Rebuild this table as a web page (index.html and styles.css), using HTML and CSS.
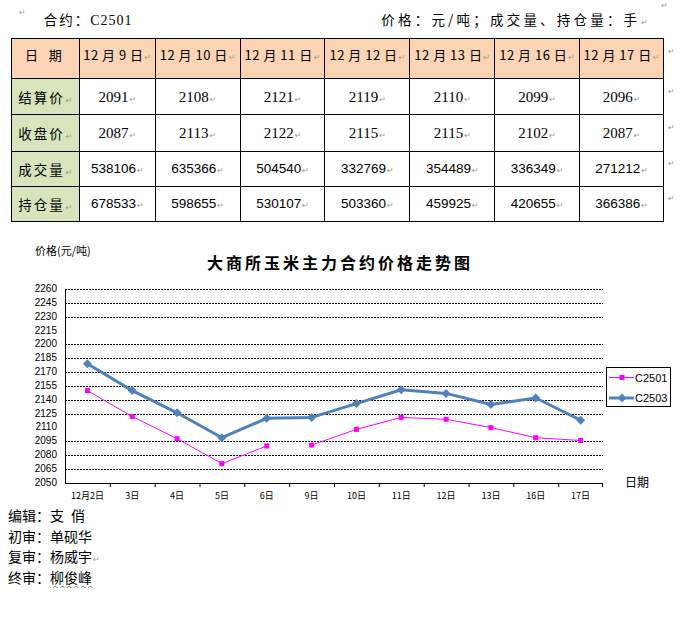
FILE: index.html
```html
<!DOCTYPE html>
<html lang="zh">
<head>
<meta charset="utf-8">
<link rel="stylesheet" href="styles.css">
</head>
<body>
<div class="page">
  <div class="topline">
    <span class="pm pm-lead">↵</span>
    <span class="contract">合约：<span class="code">C2501</span></span>
    <span class="units">价格：元/吨；成交量、持仓量：手<span class="pm">↵</span></span>
    <span class="pm pm-corner">↵</span>
  </div>
  <div class="tablewrap">
    <table class="data">
      <tr class="head">
        <td class="rowhead">日&nbsp;期</td>
        <td>12 月 9 日<span class="pm">↵</span></td>
        <td>12 月 10 日<span class="pm">↵</span></td>
        <td>12 月 11 日<span class="pm">↵</span></td>
        <td>12 月 12 日<span class="pm">↵</span></td>
        <td>12 月 13 日<span class="pm">↵</span></td>
        <td>12 月 16 日<span class="pm">↵</span></td>
        <td>12 月 17 日<span class="pm">↵</span></td>
        <td class="side"><span class="pm">↵</span></td>
      </tr>
      <tr class="serif r1">
        <td class="rowhead">结算价<span class="pm">↵</span></td>
        <td>2091<span class="pm">↵</span></td>
        <td>2108<span class="pm">↵</span></td>
        <td>2121<span class="pm">↵</span></td>
        <td>2119<span class="pm">↵</span></td>
        <td>2110<span class="pm">↵</span></td>
        <td>2099<span class="pm">↵</span></td>
        <td>2096<span class="pm">↵</span></td>
        <td class="side"><span class="pm">↵</span></td>
      </tr>
      <tr class="serif r2">
        <td class="rowhead">收盘价<span class="pm">↵</span></td>
        <td>2087<span class="pm">↵</span></td>
        <td>2113<span class="pm">↵</span></td>
        <td>2122<span class="pm">↵</span></td>
        <td>2115<span class="pm">↵</span></td>
        <td>2115<span class="pm">↵</span></td>
        <td>2102<span class="pm">↵</span></td>
        <td>2087<span class="pm">↵</span></td>
        <td class="side"><span class="pm">↵</span></td>
      </tr>
      <tr class="sans r3">
        <td class="rowhead">成交量<span class="pm">↵</span></td>
        <td>538106<span class="pm">↵</span></td>
        <td>635366<span class="pm">↵</span></td>
        <td>504540<span class="pm">↵</span></td>
        <td>332769<span class="pm">↵</span></td>
        <td>354489<span class="pm">↵</span></td>
        <td>336349<span class="pm">↵</span></td>
        <td>271212<span class="pm">↵</span></td>
        <td class="side"><span class="pm">↵</span></td>
      </tr>
      <tr class="sans r4">
        <td class="rowhead">持仓量<span class="pm">↵</span></td>
        <td>678533<span class="pm">↵</span></td>
        <td>598655<span class="pm">↵</span></td>
        <td>530107<span class="pm">↵</span></td>
        <td>503360<span class="pm">↵</span></td>
        <td>459925<span class="pm">↵</span></td>
        <td>420655<span class="pm">↵</span></td>
        <td>366386<span class="pm">↵</span></td>
        <td class="side"><span class="pm">↵</span></td>
      </tr>
    </table>
  </div>

  <svg class="chart" width="680" height="284" viewBox="0 221 680 284" xmlns="http://www.w3.org/2000/svg">
    <text class="ylabel-title" x="35" y="255">价格(元/吨)</text>
    <text class="title" x="340" y="269" text-anchor="middle">大商所玉米主力合约价格走势图</text>

    <g class="grid" stroke="#000" stroke-width="1" stroke-dasharray="2,1" fill="none">
      <line x1="65" x2="603" y1="289.5" y2="289.5"/>
      <line x1="65" x2="603" y1="303.5" y2="303.5"/>
      <line x1="65" x2="603" y1="317.5" y2="317.5"/>
      <line x1="65" x2="603" y1="344.5" y2="344.5"/>
      <line x1="65" x2="603" y1="358.5" y2="358.5"/>
      <line x1="65" x2="603" y1="372.5" y2="372.5"/>
      <line x1="65" x2="603" y1="386.5" y2="386.5"/>
      <line x1="65" x2="603" y1="400.5" y2="400.5"/>
      <line x1="65" x2="603" y1="414.5" y2="414.5"/>
      <line x1="65" x2="603" y1="441.5" y2="441.5"/>
      <line x1="65" x2="603" y1="455.5" y2="455.5"/>
      <line x1="65" x2="603" y1="469.5" y2="469.5"/>
    </g>
    <g stroke="#000" stroke-width="1" fill="none">
      <line x1="65.5" x2="65.5" y1="289" y2="483.5"/>
      <line x1="65" x2="603" y1="483.5" y2="483.5"/>
      <line x1="110.3" x2="110.3" y1="483" y2="487"/>
      <line x1="155.2" x2="155.2" y1="483" y2="487"/>
      <line x1="200" x2="200" y1="483" y2="487"/>
      <line x1="244.8" x2="244.8" y1="483" y2="487"/>
      <line x1="289.7" x2="289.7" y1="483" y2="487"/>
      <line x1="334.5" x2="334.5" y1="483" y2="487"/>
      <line x1="379.3" x2="379.3" y1="483" y2="487"/>
      <line x1="424.2" x2="424.2" y1="483" y2="487"/>
      <line x1="469" x2="469" y1="483" y2="487"/>
      <line x1="513.8" x2="513.8" y1="483" y2="487"/>
      <line x1="558.7" x2="558.7" y1="483" y2="487"/>
      <line x1="602.5" x2="602.5" y1="483" y2="487"/>
    </g>

    <g class="yticks" text-anchor="end">
      <text x="57" y="292">2260</text>
      <text x="57" y="306">2245</text>
      <text x="57" y="320">2230</text>
      <text x="57" y="334">2215</text>
      <text x="57" y="347">2200</text>
      <text x="57" y="361">2185</text>
      <text x="57" y="375">2170</text>
      <text x="57" y="389">2155</text>
      <text x="57" y="403">2140</text>
      <text x="57" y="417">2125</text>
      <text x="57" y="430">2110</text>
      <text x="57" y="444">2095</text>
      <text x="57" y="458">2080</text>
      <text x="57" y="472">2065</text>
      <text x="57" y="486">2050</text>
    </g>

    <g class="xticks" text-anchor="middle">
      <text x="87.4" y="499">12月2日</text>
      <text x="132.2" y="499">3日</text>
      <text x="177.1" y="499">4日</text>
      <text x="221.9" y="499">5日</text>
      <text x="266.7" y="499">6日</text>
      <text x="311.6" y="499">9日</text>
      <text x="356.4" y="499">10日</text>
      <text x="401.2" y="499">11日</text>
      <text x="446.1" y="499">12日</text>
      <text x="490.9" y="499">13日</text>
      <text x="535.7" y="499">16日</text>
      <text x="580.6" y="499">17日</text>
    </g>
    <text class="xtitle" x="625" y="487">日期</text>

    <!-- C2501 -->
    <g stroke="#ff00ff" stroke-width="1" fill="none">
      <polyline points="87.4,390.6 132.2,416.5 177.1,438.7 221.9,463.6 266.7,446"/>
      <polyline points="311.6,445.1 356.4,429.4 401.2,417.4 446.1,419.3 490.9,427.6 535.7,437.7 580.6,440.5"/>
    </g>
    <g fill="#ff00ff">
      <rect x="84.9" y="388.1" width="5" height="5"/>
      <rect x="129.7" y="414" width="5" height="5"/>
      <rect x="174.6" y="436.2" width="5" height="5"/>
      <rect x="219.4" y="461.1" width="5" height="5"/>
      <rect x="264.2" y="443.5" width="5" height="5"/>
      <rect x="309.1" y="442.6" width="5" height="5"/>
      <rect x="353.9" y="426.9" width="5" height="5"/>
      <rect x="398.7" y="414.9" width="5" height="5"/>
      <rect x="443.6" y="416.8" width="5" height="5"/>
      <rect x="488.4" y="425.1" width="5" height="5"/>
      <rect x="533.2" y="435.2" width="5" height="5"/>
      <rect x="578.1" y="438" width="5" height="5"/>
    </g>

    <!-- C2503 -->
    <polyline stroke="#4f81bd" stroke-width="3" fill="none" stroke-linejoin="round"
      points="87.4,363.8 132.2,390.6 177.1,412.8 221.9,437.7 266.7,418.3 311.6,417.4 356.4,403.6 401.2,389.7 446.1,393.4 490.9,404.5 535.7,398 580.6,420.2"/>
    <g fill="#4f81bd">
      <path d="M87.4 359.3l4.5 4.5-4.5 4.5-4.5-4.5z"/>
      <path d="M132.2 386.1l4.5 4.5-4.5 4.5-4.5-4.5z"/>
      <path d="M177.1 408.3l4.5 4.5-4.5 4.5-4.5-4.5z"/>
      <path d="M221.9 433.2l4.5 4.5-4.5 4.5-4.5-4.5z"/>
      <path d="M266.7 413.8l4.5 4.5-4.5 4.5-4.5-4.5z"/>
      <path d="M311.6 412.9l4.5 4.5-4.5 4.5-4.5-4.5z"/>
      <path d="M356.4 399.1l4.5 4.5-4.5 4.5-4.5-4.5z"/>
      <path d="M401.2 385.2l4.5 4.5-4.5 4.5-4.5-4.5z"/>
      <path d="M446.1 388.9l4.5 4.5-4.5 4.5-4.5-4.5z"/>
      <path d="M490.9 400l4.5 4.5-4.5 4.5-4.5-4.5z"/>
      <path d="M535.7 393.5l4.5 4.5-4.5 4.5-4.5-4.5z"/>
      <path d="M580.6 415.7l4.5 4.5-4.5 4.5-4.5-4.5z"/>
    </g>

    <!-- legend -->
    <rect x="606.5" y="367.5" width="64" height="39" fill="#fff" stroke="#000" stroke-width="1"/>
    <line x1="609" x2="634" y1="377.5" y2="377.5" stroke="#ff00ff" stroke-width="1"/>
    <rect x="619.5" y="375" width="5" height="5" fill="#ff00ff"/>
    <text class="legend" x="635" y="381.5">C2501</text>
    <line x1="609" x2="634" y1="398" y2="398" stroke="#4f81bd" stroke-width="3"/>
    <path d="M622 393.5l4.5 4.5-4.5 4.5-4.5-4.5z" fill="#4f81bd"/>
    <text class="legend" x="635" y="402">C2503</text>
  </svg>

  <div class="credits">
    <p>编辑：支&ensp;俏</p>
    <p>初审：单砚华</p>
    <p>复审：杨威宇<span class="pm">↵</span></p>
    <p>终审：<span class="spell">柳俊峰</span></p>
  </div>
</div>
</body>
</html>
```

FILE: styles.css
```css
html, body {
  margin: 0;
  padding: 0;
  background: #fff;
}
body {
  font-family: "Noto Sans CJK SC", "Liberation Sans", sans-serif;
  color: #000;
}
.page {
  width: 680px;
  position: relative;
}
.pm {
  font-family: "DejaVu Sans", sans-serif;
  font-size: 8px;
  color: #9a9a9a;
  margin-left: 1px;
  letter-spacing: 0;
  line-height: 0;
}
.topline {
  height: 38px;
  display: flex;
  align-items: center;
  font-size: 13.5px;
  position: relative;
}
.pm-lead {
  margin-left: 19px;
  align-self: flex-start;
  margin-top: 13px;
}
.contract {
  margin-left: 18px;
  letter-spacing: 2px;
}
.contract .code {
  font-family: "Liberation Serif", serif;
  font-size: 14px;
  letter-spacing: 1px;
}
.units {
  margin-left: auto;
  margin-right: 32px;
  letter-spacing: 3.2px;
}
.pm-corner {
  position: absolute;
  right: 12px;
  top: 6px;
}
.tablewrap {
  padding-left: 11px;
  height: 183px;
}
table.data {
  border-collapse: collapse;
  table-layout: fixed;
}
table.data td {
  border: 1px solid #000;
  text-align: center;
  padding: 0;
  white-space: nowrap;
  overflow: hidden;
  box-sizing: border-box;
}
table.data td:nth-child(1) { width: 68px; }
table.data td:nth-child(2) { width: 76px; }
table.data td:nth-child(3) { width: 85px; }
table.data td:nth-child(4) { width: 85px; }
table.data td:nth-child(5) { width: 85px; }
table.data td:nth-child(6) { width: 85px; }
table.data td:nth-child(7) { width: 85px; }
table.data td:nth-child(8) { width: 84px; }
table.data td.side {
  border: none;
  width: 16px;
  text-align: left;
  vertical-align: top;
  padding-left: 3px;
  padding-top: 6px;
  line-height: 8px;
}
tr.head td {
  background: #fbd4b4;
  height: 40px;
  font-size: 13px;
  vertical-align: top;
  padding-top: 6px;
  letter-spacing: 0.5px;
}
tr.head td.rowhead {
  letter-spacing: 4px;
}
tr.head td.side {
  background: none;
}
tr.r1 td { height: 36px; }
tr.r2 td { height: 37px; }
tr.r3 td { height: 35px; }
tr.r4 td { height: 35px; }
td.rowhead {
  background: #d7e4bc;
  font-size: 13.5px;
  letter-spacing: 2px;
}
tr.serif td {
  font-family: "Liberation Serif", serif;
  font-size: 15px;
  line-height: 18px;
}
tr.sans td {
  font-family: "Liberation Sans", sans-serif;
  font-size: 13.5px;
  line-height: 18px;
}
tr.serif td.rowhead, tr.sans td.rowhead {
  font-family: "Noto Sans CJK SC", sans-serif;
  font-size: 13.5px;
}
svg.chart {
  display: block;
}
.chart text {
  font-family: "Liberation Sans", "Noto Sans CJK SC", sans-serif;
}
.chart .ylabel-title {
  font-family: "Noto Sans CJK SC", sans-serif;
  font-size: 11px;
}
.chart .title {
  font-family: "Noto Sans CJK SC", sans-serif;
  font-size: 16px;
  font-weight: bold;
  letter-spacing: 3px;
}
.chart .yticks text {
  font-size: 10px;
}
.chart .xticks text {
  font-family: "Noto Sans CJK SC", sans-serif;
  font-size: 9px;
}
.chart .xtitle {
  font-family: "Noto Sans CJK SC", sans-serif;
  font-size: 12px;
}
.chart .legend {
  font-size: 11px;
}
.credits {
  padding-left: 8px;
  font-size: 14px;
}
.credits p {
  margin: 0;
  height: 20.7px;
  line-height: 20.7px;
}
.spell {
  text-decoration: underline wavy #4a9a4a;
  text-decoration-thickness: 1px;
  text-underline-offset: 2px;
}
```
